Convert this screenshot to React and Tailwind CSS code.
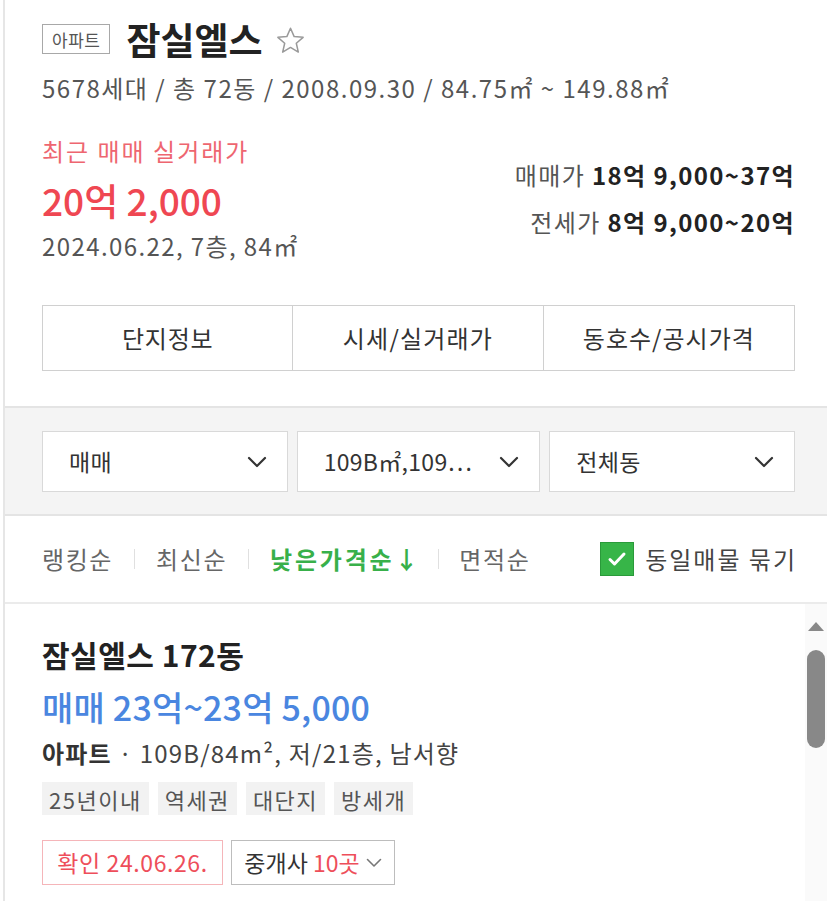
import React from "react";

const F = { fontFamily: '"Noto Sans CJK KR", "Noto Sans", sans-serif' };

function Chevron() {
  return (
    <svg width="20" height="12" viewBox="0 0 20 12" fill="none">
      <path d="M2 2l8 8 8-8" stroke="#333" strokeWidth="2.2" strokeLinecap="round" strokeLinejoin="round" />
    </svg>
  );
}

function Select({ label, w }) {
  return (
    <div className={`h-[61px] ${w} bg-white border border-[#d9d9d9] flex items-center justify-between pl-[26px] pr-[20px]`}>
      <span className="text-[23px] text-[#333] tracking-[0.3px] whitespace-nowrap leading-none">{label}</span>
      <Chevron />
    </div>
  );
}

export default function App() {
  return (
    <div style={F} className="w-[827px] h-[901px] overflow-hidden bg-white">
      <div className="ml-[3px] h-full border-l-[2px] border-[#e6e6e6] flex flex-col relative">
        {/* header section */}
        <div className="pl-[37px] pr-[32px] pt-[21px] h-[406px] shrink-0 flex flex-col">
          <div className="flex items-center h-[36px]">
            <span className="h-[30px] px-[9px] border border-[#a8a8a8] text-[17px] text-[#555] flex items-center leading-none tracking-[0.5px]">아파트</span>
            <span className="ml-[16px] text-[37px] font-bold text-[#222] leading-none">잠실엘스</span>
            <svg className="ml-[12px] mt-[2px]" width="31" height="29" viewBox="0 0 24 23" fill="none">
              <path d="M12 1.8l2.9 6.6 7.1.6-5.4 4.7 1.6 7-6.2-3.7-6.2 3.7 1.6-7L2 9l7.1-.6z" stroke="#9a9a9a" strokeWidth="1.2" strokeLinejoin="round" />
            </svg>
          </div>
          <div className="mt-[15px] text-[24px] text-[#555] leading-[32px] tracking-[1.5px] whitespace-nowrap">
            5678세대 / 총 72동 / 2008.09.30 / 84.75㎡ ~ 149.88㎡
          </div>
          <div className="flex justify-between">
            <div className="flex flex-col">
              <span className="mt-[31px] text-[24px] text-[#ee6670] leading-[32px] tracking-[2px]">최근 매매 실거래가</span>
              <span className="mt-[11px] text-[37px] text-[#ef4752] font-medium leading-[44px]">20억 2,000</span>
              <span className="mt-[8px] text-[24px] text-[#555] leading-[32px] tracking-[1.4px]">2024.06.22, 7층, 84㎡</span>
            </div>
            <div className="flex flex-col items-end pt-[55px]">
              <span className="text-[24px] leading-[32px] tracking-[1.4px] text-[#555]">
                매매가 <b className="text-[#222] font-bold">18억 9,000~37억</b>
              </span>
              <span className="mt-[15px] text-[24px] leading-[32px] tracking-[1.4px] text-[#555]">
                전세가 <b className="text-[#222] font-bold">8억 9,000~20억</b>
              </span>
            </div>
          </div>
          <div className="mt-[43px] h-[66px] grid grid-cols-3 border border-[#d0d0d0]">
            <div className="flex items-center justify-center text-[24px] text-[#333] border-r border-[#d0d0d0] tracking-[0.8px]">단지정보</div>
            <div className="flex items-center justify-center text-[24px] text-[#333] border-r border-[#d0d0d0] tracking-[1.2px]">시세/실거래가</div>
            <div className="flex items-center justify-center text-[24px] text-[#333] tracking-[1px]">동호수/공시가격</div>
          </div>
        </div>
        {/* filter section */}
        <div className="h-[110px] shrink-0 bg-[#f4f4f4] border-t-[2px] border-b-[2px] border-[#e4e4e4] pl-[37px] pr-[32px] pt-[23px]">
          <div className="flex gap-[9px]">
            <Select label="매매" w="w-[246px]" />
            <Select label="109B㎡,109⋯" w="w-[244px]" />
            <Select label="전체동" w="w-[246px]" />
          </div>
        </div>
        {/* sort row */}
        <div className="h-[88px] shrink-0 border-b-[2px] border-[#ebebeb] pl-[37px] pr-[30px] flex items-center">
          <div className="flex items-center text-[24px] text-[#666] tracking-[1.6px] leading-none">
            <span>랭킹순</span>
            <span className="w-px h-[20px] bg-[#e0e0e0] mx-[21px]" />
            <span>최신순</span>
            <span className="w-px h-[20px] bg-[#e0e0e0] mx-[21px]" />
            <span className="text-[#38b04a] font-bold tracking-[2.8px]">낮은가격순↓</span>
            <span className="w-px h-[20px] bg-[#e0e0e0] ml-[17px] mr-[20px]" />
            <span>면적순</span>
          </div>
          <div className="ml-auto flex items-center">
            <span className="w-[34px] h-[34px] bg-[#37b548] border border-[#2a9a3a] flex items-center justify-center">
              <svg width="20" height="16" viewBox="0 0 20 16" fill="none">
                <path d="M3 8.5l4.5 4.5L17 3" stroke="white" strokeWidth="3" strokeLinecap="round" strokeLinejoin="round" />
              </svg>
            </span>
            <span className="ml-[11px] text-[24px] text-[#444] tracking-[2px] leading-none">동일매물 묶기</span>
          </div>
        </div>
        {/* listing */}
        <div className="flex-1 relative pl-[37px] pt-[30px]">
          <div className="text-[30px] font-bold text-[#222] leading-[40px] tracking-[0.5px]">잠실엘스 172동</div>
          <div className="mt-[13px] text-[34px] font-medium text-[#4a86e0] leading-[40px] tracking-[0.2px]">매매 23억~23억 5,000</div>
          <div className="mt-[10px] text-[24px] text-[#444] leading-[32px] tracking-[1.2px] whitespace-nowrap">
            <b className="font-bold text-[#333]">아파트</b> · 109B/84m², 저/21층, 남서향
          </div>
          <div className="mt-[13px] flex gap-[9px]">
            {["25년이내", "역세권", "대단지", "방세개"].map((t) => (
              <span key={t} className="h-[33px] px-[7px] bg-[#f2f2f2] text-[22px] text-[#555] flex items-center tracking-[1.5px] leading-none">{t}</span>
            ))}
          </div>
          <div className="mt-[25px] flex gap-[8px]">
            <span className="h-[45px] w-[181px] border border-[#f5b5b9] text-[23px] text-[#ee4e5a] flex items-center justify-center tracking-[0.6px] leading-none">확인 24.06.26.</span>
            <span className="h-[45px] w-[164px] border border-[#bdbdbd] text-[23px] text-[#333] flex items-center justify-center gap-[6px] leading-none">
              <span>중개사 <span className="text-[#ee4e5a]">10곳</span></span>
              <svg width="16" height="10" viewBox="0 0 16 10" fill="none">
                <path d="M1.5 1.5l6.5 6.5 6.5-6.5" stroke="#777" strokeWidth="1.6" strokeLinecap="round" strokeLinejoin="round" />
              </svg>
            </span>
          </div>
          {/* scrollbar */}
          <div className="absolute right-0 top-0 bottom-0 w-[22px] bg-[#fafafa] flex flex-col items-center pt-[17px]">
            <svg width="18" height="11" viewBox="0 0 18 11">
              <path d="M9 1L17 10H1z" fill="#888" />
            </svg>
            <div className="mt-[18px] w-[18px] h-[98px] rounded-full bg-[#888]" />
          </div>
        </div>
      </div>
    </div>
  );
}
